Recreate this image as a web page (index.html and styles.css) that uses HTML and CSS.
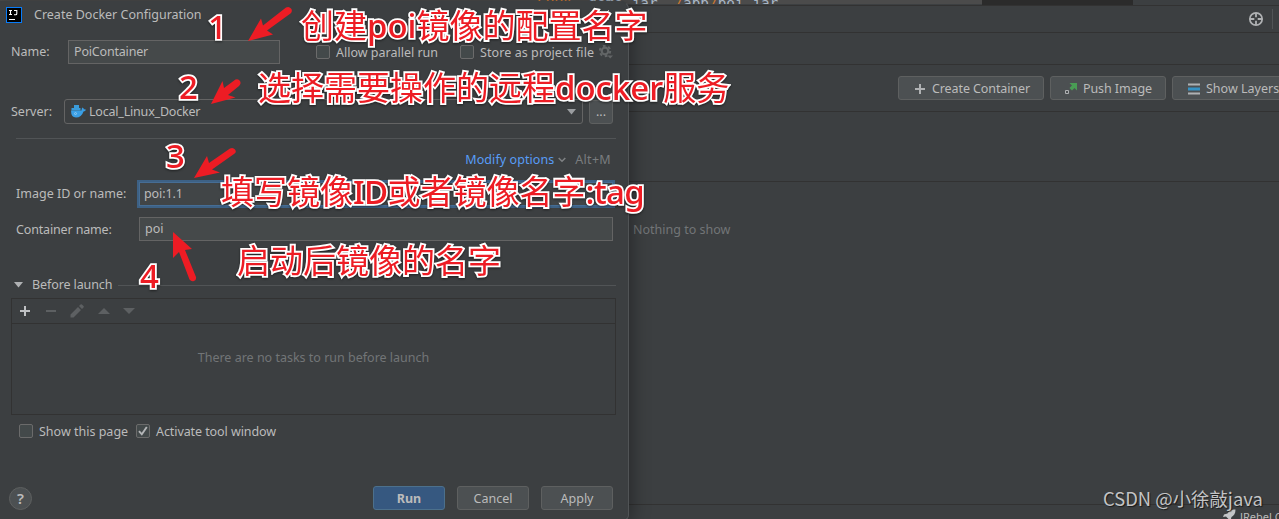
FILE: index.html
```
<!DOCTYPE html>
<html lang="zh-CN">
<head>
    <title>Create Docker Configuration</title>
    <meta charset="UTF-8">
    <link rel="stylesheet" href="styles.css">
</head>
<body>
    <!-- IDE window behind the dialog -->
    <div class="ide">
        <div class="editor-strip">
            <div class="editor-line"><span class="code"><i>COPY</i> demo.jar <i>/</i>app<i>/</i>poi.jar</span></div>
            <div class="editor-gutter"></div>
        </div>
        <div class="panel-header">
            <svg class="target-icon" width="16" height="16" viewBox="0 0 16 16" fill="none" stroke="#afb1b3">
                <circle cx="8" cy="8" r="6.2" stroke-width="1.7"/>
                <path d="M8 2v4.3M8 9.7V14M2 8h4.3M9.7 8H14" stroke-width="1.8"/>
            </svg>
            <div class="header-divider"></div>
        </div>
        <div class="panel-tabs"></div>
        <div class="panel-actions">
            <button class="btn image-btn create-btn">
                <svg width="12" height="12" viewBox="0 0 12 12"><path d="M6 1v10M1 6h10" stroke="#afb1b3" stroke-width="2"/></svg>
                <span>Create Container</span>
            </button>
            <button class="btn image-btn push-btn">
                <svg width="12" height="12" viewBox="0 0 12 12">
                    <path d="M4.5 0H12v7.5L9.500 5 7 7.500 4.500 5 7 2.500z" fill="#499c54"/>
                    <path d="M.5 7.500h3v3h-3z" fill="none" stroke="#afb1b3"/>
                </svg>
                <span>Push Image</span>
            </button>
            <button class="btn image-btn layers-btn">
                <svg width="12" height="12" viewBox="0 0 12 12">
                    <path d="M0 .5h12v2H0zM0 9.5h12v2H0z" fill="#afb1b3"/>
                    <path d="M0 4.5h12v3H0z" fill="#3592c4"/>
                </svg>
                <span>Show Layers</span>
            </button>
        </div>
        <div class="panel-columns"></div>
        <div class="panel-empty"><span>Nothing to show</span></div>
        <div class="status-bar">
            <svg width="13" height="13" viewBox="0 0 13 13" fill="#c4c6c8"><path d="M12.5.5C8 .5 6 2.5 4.5 4.5L1 5.5 0 8l3-.5 2.5 2.5L5 13l2.500-1.500L8.500 8C11 6.500 12.500 4.500 12.500.5z"/></svg>
            <span>JRebel Console</span>
        </div>
    </div>

    <div class="dialog">
        <div class="title-bar">
            <svg class="app-icon" width="16" height="16" viewBox="0 0 16 16">
                <rect x=".5" y=".5" width="15" height="15" fill="#000" stroke="#087cfa"/>
                <path d="M3 3.500h3M4.500 3v5M3 7.500h3M8 3.500h2.800v3.200q0 1-1 1H8M3 12.500h6" stroke="#fff" stroke-width="1.100" fill="none"/>
            </svg>
            <span class="title">Create Docker Configuration</span>
            <svg class="close-icon" width="10" height="10" viewBox="0 0 10 10"><path d="M0 0l10 10M10 0L0 10" stroke="#bbb"/></svg>
        </div>

        <div class="name-row">
            <label class="name-label">Name:</label>
            <div class="field name-field">PoiContainer</div>
            <div class="checkbox"></div>
            <span class="check-label parallel">Allow parallel run</span>
            <div class="checkbox"></div>
            <span class="check-label store">Store as project file</span>
            <svg class="gear" width="14" height="14" viewBox="0 0 14 14">
                <circle cx="6" cy="6" r="3.300" fill="none" stroke="#626566" stroke-width="2.200"/>
                <circle cx="6" cy="6" r="5.200" fill="none" stroke="#626566" stroke-width="2" stroke-dasharray="2.700 2.745"/>
                <path d="M8.500 10.500h5.500L11.200 13.500z" fill="#626566"/>
            </svg>
        </div>

        <div class="server-row">
            <label class="server-label">Server:</label>
            <div class="combo">
                <svg width="15" height="13" viewBox="0 0 15 13">
                    <path d="M3 0h5v4H3zM.5 3h9v2.500H.5z" fill="#3a9bd9"/>
                    <path d="M0 5.500h10.500Q10.500 3.500 11.500 2.500 12.800 3.300 12.800 4.300 14.200 4.100 15 4.800 14.300 6.400 12.500 6.400 10.500 12.500 5 12.500 0 12.500 0 5.500z" fill="#3a9fe6"/>
                    <circle cx="4.500" cy="8.600" r="1" fill="none" stroke="#a8d6f5" stroke-width=".7"/>
                </svg>
                <span class="server-name">Local_Linux_Docker</span>
                <svg class="arrow" width="9" height="6" viewBox="0 0 9 6"><path d="M0 0h9L4.500 5.500z" fill="#9a9da0"/></svg>
            </div>
            <button class="btn browse-btn">...</button>
        </div>

        <div class="separator"></div>

        <div class="options-row">
            <span class="link">Modify options</span>
            <svg width="8" height="6" viewBox="0 0 8 6"><path d="M.7 1L4 4.300 7.300 1" fill="none" stroke="#7f8284" stroke-width="1.500"/></svg>
            <span class="shortcut">Alt+M</span>
        </div>

        <div class="form-row image-row">
            <label>Image ID or name:</label>
            <div class="field focused">poi:1.1</div>
        </div>
        <div class="form-row container-row">
            <label>Container name:</label>
            <div class="field">poi</div>
        </div>

        <div class="section-title">
            <svg width="9" height="6" viewBox="0 0 9 6"><path d="M0 0h9L4.500 5.500z" fill="#afb1b3"/></svg>
            <span>Before launch</span>
            <div class="section-line"></div>
        </div>

        <div class="task-list">
            <div class="task-toolbar">
                <svg width="12" height="12" viewBox="0 0 12 12"><path d="M6 1v10M1 6h10" stroke="#bfc1c3" stroke-width="2"/></svg>
                <svg width="12" height="12" viewBox="0 0 12 12"><path d="M1 6h10" stroke="#5d6062" stroke-width="2"/></svg>
                <svg width="14" height="14" viewBox="0 0 14 14" fill="#5d6062"><path d="M.5 13.500V10.500L8 3l3 3-7.500 7.500zM9 2l1.500-1.500q.7-.6 1.400 0l1.600 1.600q.6.700 0 1.400L12 5z"/></svg>
                <svg width="12" height="12" viewBox="0 0 12 12"><path d="M0 9h12L6 3z" fill="#5d6062"/></svg>
                <svg width="12" height="12" viewBox="0 0 12 12"><path d="M0 3h12L6 9z" fill="#5d6062"/></svg>
            </div>
            <div class="task-empty">There are no tasks to run before launch</div>
        </div>

        <div class="flags-row">
            <div class="checkbox"></div>
            <span class="check-label show-page">Show this page</span>
            <div class="checkbox">
                <svg width="12" height="12" viewBox="0 0 12 12"><path d="M2 6.200l2.800 3.100L9.800 2" fill="none" stroke="#b4b6b8" stroke-width="1.900"/></svg>
            </div>
            <span class="check-label activate">Activate tool window</span>
        </div>

        <div class="footer">
            <div class="help">?</div>
            <button class="btn run-btn">Run</button>
            <button class="btn">Cancel</button>
            <button class="btn">Apply</button>
        </div>
    </div>

    <!-- Annotations drawn over the windows -->
    <svg class="arrows" width="640" height="300" viewBox="0 0 640 300" fill="#ed1c24">
        <path d="M248 41l13-22.500 2 7 23-18q3-1.500 5 1t-.5 5l-23.500 17 6 4z"/>
        <path d="M211 104l11.500-23 1.500 7 11.500-8.500q3-1 4.500 1.500t-1 5l-11 9 7.500 2.500z"/>
        <path d="M194 178l13-22 2 7 21-14.500q3-1.500 5 1t-1 4.500l-22 15.500 8 3z"/>
        <path d="M173 232l19 17-7 1 11 27q.5 3-2 4t-4.500-1.500L179 252l-6 6z"/>
    </svg>
    <div class="note num num-1">1</div>
    <div class="note num num-2">2</div>
    <div class="note num num-3">3</div>
    <div class="note num num-4">4</div>
    <div class="note note-1">创建<span class="latin">poi</span>镜像的配置名字</div>
    <div class="note note-2">选择需要操作的远程<span class="latin">docker</span>服务</div>
    <div class="note note-3">填写镜像<span class="latin">ID</span>或者镜像名字<span class="latin">:tag</span></div>
    <div class="note note-4">启动后镜像的名字</div>
    <div class="watermark">CSDN @小徐敲java</div>
</body>
</html>
```
FILE: styles.css
```
* {
    box-sizing: border-box;
}

body {
    margin: 0;
    width: 1279px;
    height: 519px;
    position: relative;
    overflow: hidden;
    background: #3c3f41;
    color: #bbbbbb;
    font-family: 'Noto Sans', 'Noto Sans CJK SC', sans-serif;
    font-size: 12.5px;
    line-height: 18px;
    white-space: nowrap;
}

svg {
    display: block;
    flex: none;
}

.btn {
    height: 24px;
    width: 72px;
    padding: 1px 0 0;
    border: 1px solid #5e6060;
    border-radius: 3px;
    background: #4c5052;
    color: #bbbbbb;
    font: inherit;
    white-space: nowrap;
}

/* IDE window */
.ide {
    height: 519px;
    display: flex;
    flex-direction: column;
}

.editor-strip {
    display: flex;
    height: 6px;
    border-bottom: 1px solid #323232;
}

.editor-line {
    width: 982px;
    height: 4px;
    background: #4b4b4b;
    overflow: hidden;
    padding-left: 537px;
}

.code {
    display: block;
    margin-top: -5px;
    font: 14.4px/16px 'DejaVu Sans Mono', monospace;
    color: #a9b7c6;
    word-spacing: 8px;
}

.code i {
    font-style: normal;
    color: #cc7832;
}

.editor-gutter {
    width: 151px;
    background: #2b2b2b;
}

.panel-header {
    height: 27px;
    display: flex;
    justify-content: flex-end;
    align-items: center;
    border-bottom: 1px solid #323232;
}

.header-divider {
    width: 1px;
    height: 20px;
    margin: 0 6px 0 8px;
    background: #515456;
}

.panel-tabs {
    height: 32px;
    border-bottom: 1px solid #323232;
}

.panel-actions {
    height: 47px;
    display: flex;
    align-items: center;
    gap: 6px;
    padding-left: 898px;
    border-bottom: 1px solid #323232;
}

.image-btn {
    flex: none;
    display: flex;
    align-items: center;
    gap: 6px;
    padding-left: 15px;
}

.create-btn {
    width: 146px;
    letter-spacing: -0.1px;
}

.push-btn {
    width: 116px;
    padding-left: 14px;
    letter-spacing: -0.1px;
}

.layers-btn {
    width: 124px;
}

.panel-columns {
    height: 70px;
    border-bottom: 1px solid #323232;
}

.panel-empty {
    height: 323px;
    padding: 39px 0 0 633px;
    border-bottom: 1px solid #323232;
    color: #727577;
}

.status-bar {
    height: 14px;
    display: flex;
    gap: 4px;
    padding: 4px 0 0 1223px;
    font-size: 11px;
    line-height: 16px;
}

/* Dialog */
.dialog {
    position: absolute;
    left: -1px;
    top: 1px;
    width: 630px;
    height: 520px;
    display: flex;
    flex-direction: column;
    background: #3c3f41;
    border: 1px solid #515456;
    border-top-color: #3c3f41;
    border-radius: 0 8px 6px 0;
    box-shadow: 3px 2px 18px rgba(0, 0, 0, .35);
}

.title-bar {
    height: 26px;
    display: flex;
    align-items: center;
    padding-left: 6px;
}

.title {
    width: 577px;
    padding-left: 12px;
}

.name-row {
    height: 24px;
    margin-top: 12px;
    display: flex;
    align-items: center;
    padding-left: 11px;
}

.name-label {
    width: 57px;
}

.field {
    height: 24px;
    padding-left: 5px;
    line-height: 22px;
    border: 1px solid #646464;
    background: #45494a;
}

.name-field {
    width: 212px;
    margin-right: 36px;
    letter-spacing: -0.18px;
}

.checkbox {
    width: 14px;
    height: 14px;
    border: 1px solid #6b6b6b;
    border-radius: 2px;
    background: #43494a;
    flex: none;
}

.check-label {
    margin-left: 6px;
    padding-top: 2px;
}

.parallel {
    width: 124px;
}

.store {
    width: 119px;
    letter-spacing: 0.08px;
}

.server-row {
    height: 25px;
    margin-top: 35px;
    display: flex;
    align-items: center;
    padding-left: 11px;
}

.server-label {
    width: 53px;
}

.combo {
    width: 519px;
    height: 25px;
    margin-right: 6px;
    padding: 0 6px;
    display: flex;
    align-items: center;
    gap: 3px;
    border: 1px solid #646464;
    border-radius: 3px;
}

.server-name {
    letter-spacing: -0.2px;
}

.combo .arrow {
    margin-left: auto;
}

.browse-btn {
    width: 24px;
}

.separator {
    height: 1px;
    margin: 14px 12px 0 16px;
    background: #515456;
}

.options-row {
    height: 20px;
    margin-top: 11px;
    display: flex;
    align-items: center;
    justify-content: flex-end;
    padding-right: 17px;
}

.link {
    margin-right: 4px;
    color: #589df6;
    letter-spacing: 0.07px;
}

.shortcut {
    margin-left: 9px;
    color: #7a7d7f;
    letter-spacing: 0.3px;
}

.form-row {
    display: flex;
    align-items: center;
    height: 24px;
    padding: 0 15px 0 16px;
}

.form-row label {
    width: 123px;
}

.form-row .field {
    flex: 1;
}

.image-row {
    margin-top: 12px;
}

.field.focused {
    padding-left: 4px;
    background: #414547;
    border-color: #466d94;
    box-shadow: 0 0 0 2px #3d6185;
    letter-spacing: -0.1px;
}

.container-row {
    margin-top: 11px;
}

.container-row label {
    padding-top: 2px;
    letter-spacing: -0.15px;
}

.section-title {
    height: 20px;
    margin-top: 34px;
    display: flex;
    align-items: center;
    padding: 0 12px 0 14px;
}

.section-title span {
    width: 86px;
    margin-left: 9px;
    letter-spacing: -0.1px;
}

.section-line {
    flex: 1;
    height: 1px;
    background: #515456;
}

.task-list {
    height: 117px;
    margin: 3px 12px 0 11px;
    border: 1px solid #323232;
}

.task-toolbar {
    height: 25px;
    display: flex;
    align-items: center;
    gap: 13.5px;
    padding-left: 7px;
    border-bottom: 1px solid #323232;
}

.task-empty {
    padding-top: 25px;
    text-align: center;
    color: #727577;
}

.flags-row {
    height: 20px;
    margin-top: 6px;
    display: flex;
    align-items: center;
    padding-left: 19px;
}

.show-page {
    width: 97px;
}

.activate {
    letter-spacing: -0.08px;
}

.footer {
    height: 24px;
    margin-top: 45px;
    display: flex;
    align-items: center;
    gap: 12px;
    padding-left: 9px;
}

.help {
    width: 23px;
    height: 23px;
    margin-right: 329px;
    border: 1px solid #5e6060;
    border-radius: 50%;
    background: #4c5052;
    font-size: 15px;
    font-weight: 600;
    line-height: 21px;
    text-align: center;
}

.run-btn {
    background: #365880;
    border-color: #4c708c;
    font-weight: bold;
}

/* Annotations */
.arrows {
    position: absolute;
    left: 0;
    top: 0;
}

.note {
    position: absolute;
    color: #ed1c24;
    font: 400 33px/44px 'Noto Sans CJK SC', sans-serif;
    -webkit-text-stroke: 3.6px #ffffff;
    paint-order: stroke fill;
    filter: drop-shadow(0 1px 1px rgba(0, 0, 0, .5));
}

.latin,
.num {
    font-family: 'Noto Sans', sans-serif;
    font-weight: 500;
}

.note-1 {
    left: 301px;
    top: 2px;
}

.note-2 {
    left: 258px;
    top: 64px;
}

.note-3 {
    left: 221px;
    top: 168px;
}

.note-3 .latin {
    letter-spacing: -0.6px;
}

.note-4 {
    left: 237px;
    top: 237px;
}

.num-1 {
    left: 208px;
    top: 5px;
}

.num-2 {
    left: 179px;
    top: 65px;
}

.num-3 {
    left: 166px;
    top: 134px;
}

.num-4 {
    left: 140px;
    top: 254px;
}

.watermark {
    position: absolute;
    left: 1103px;
    top: 486px;
    font: 18.4px/24px 'Noto Sans CJK SC', sans-serif;
    color: #c3c4c5;
    text-shadow: 1px 1px 1px rgba(0, 0, 0, .6);
}
```
